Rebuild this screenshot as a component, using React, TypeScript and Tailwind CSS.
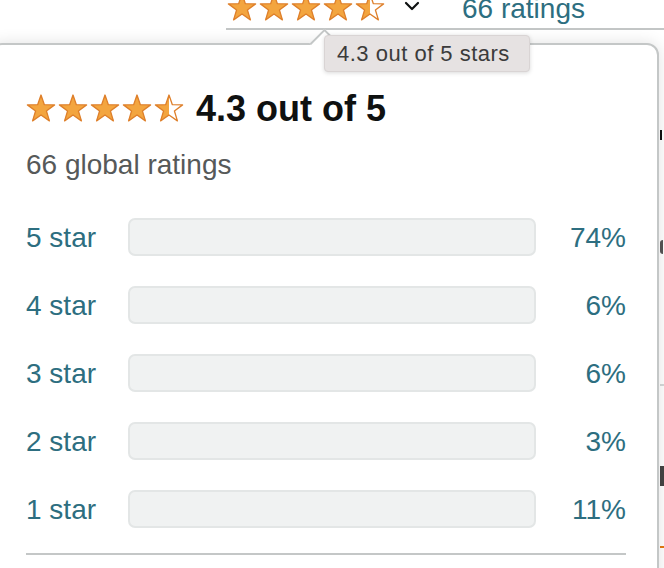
import React from 'react'

// star geometry, viewBox 0 0 30 28.5
const starPoints = Array.from({ length: 10 }, (_, i) => {
  const r = i % 2 === 0 ? 14.3 : 5.7
  const a = (Math.PI / 5) * i - Math.PI / 2
  return `${(15 + r * Math.cos(a)).toFixed(2)},${(15.3 + r * Math.sin(a)).toFixed(2)}`
}).join(' ')

const Star = ({ fill, id }: { fill: number; id: string }) => (
  <svg width="30" height="28.5" viewBox="0 0 30 28.5" className="shrink-0">
    <defs>
      <linearGradient id={id} x1="0" x2="1" y1="0" y2="0">
        <stop offset={fill} stopColor="#f3a53f" />
        <stop offset={fill} stopColor="#ffffff" />
      </linearGradient>
    </defs>
    <polygon points={starPoints} fill={`url(#${id})`} stroke="#de7f2a" strokeWidth="1.3" strokeLinejoin="round" />
  </svg>
)

const Stars = ({ prefix }: { prefix: string }) => (
  <div className="flex gap-[2px]">
    <Star fill={1} id={`${prefix}1`} />
    <Star fill={1} id={`${prefix}2`} />
    <Star fill={1} id={`${prefix}3`} />
    <Star fill={1} id={`${prefix}4`} />
    <Star fill={0.5} id={`${prefix}5`} />
  </div>
)

const rows = [
  { label: '5 star', pct: '74%' },
  { label: '4 star', pct: '6%' },
  { label: '3 star', pct: '6%' },
  { label: '2 star', pct: '3%' },
  { label: '1 star', pct: '11%' },
]

export default function App() {
  return (
    <div className="relative w-[664px] h-[568px] overflow-hidden bg-white font-['Liberation_Sans',Arial,sans-serif]">

      {/*page behind the popover*/}
      <div className="flex flex-row h-[28px] ml-[227px]">
        <div className="mt-[-7px]">
          <Stars prefix="top" />
        </div>
        <svg width="24" height="24" viewBox="0 0 24 24" fill="none" stroke="#0f1111" strokeWidth={2.2} strokeLinecap="round" strokeLinejoin="round" className="ml-[15px] mt-[-6px]">
          <path d="m6 9 6 6 6-6" />
        </svg>
        <span className="ml-[38px] mt-[-5px] text-[28px] leading-[28px] text-[#2d6e80] whitespace-nowrap">66 ratings</span>
      </div>
      <div className="ml-[226px] h-[2px] bg-[#c3c6c6]" />

      {/*edge of page content on the right*/}
      <div className="flex flex-col ml-[660px] w-[4px]">
        <div className="mt-[100px] h-[10px] w-[2px] bg-[#111]" />
        <div className="mt-[100px] h-[14px] w-[3px] rounded-l-full bg-[#555]" />
        <div className="mt-[130px] h-[2px] w-[4px] bg-[#d5d9d9]" />
        <div className="mt-[80px] h-[20px] w-[4px] bg-[#444]" />
        <div className="mt-[60px] h-[2px] w-[4px] bg-[#e47911]" />
      </div>

      {/*popover*/}
      <div className="absolute left-[-10px] top-[43px] w-[669px] h-[560px] rounded-[12px] border-2 border-[#c4c7c7] bg-white shadow-[0_0_16px_rgba(0,0,0,0.12)] pl-[34px] pr-[31px] pt-[45px]">
        {/*arrow*/}
        <div className="absolute left-[322px] top-[-12px] w-[21px] h-[21px] rotate-45 border-t-2 border-l-2 border-[#c4c7c7] bg-white" />

        <div className="flex flex-row items-center h-[36px] gap-[12px]">
          <Stars prefix="pop" />
          <span className="mt-[2px] text-[36px] leading-[36px] font-bold text-[#0f1111] whitespace-nowrap">4.3 out of 5</span>
        </div>

        <div className="mt-[25px] text-[28px] leading-[28px] text-[#565959]">66 global ratings</div>

        <div className="mt-[39px] flex flex-col gap-[30px]">
          {rows.map((r) => (
            <div key={r.label} className="flex flex-row items-center h-[38px]">
              <span className="mt-[2px] w-[102px] text-[28px] leading-[28px] text-[#2d6e80] whitespace-nowrap">{r.label}</span>
              <div className="w-[408px] h-[38px] rounded-[7px] border-2 border-[#e3e6e6] bg-[#f0f2f2]" />
              <span className="mt-[2px] flex-1 text-right text-[28px] leading-[28px] text-[#2d6e80]">{r.pct}</span>
            </div>
          ))}
        </div>

        <div className="mt-[25px] h-[2px] bg-[#c4c7c7]" />
      </div>

      {/*tooltip*/}
      <div className="absolute left-[324px] top-[35px] w-[206px] h-[37px] rounded-[4px] border border-[#d9d4d4] bg-[#e6e2e2] shadow-[0_1px_4px_rgba(0,0,0,0.15)] pl-[12px] flex items-center">
        <span className="text-[22px] leading-[22px] tracking-[0.5px] text-[#3b3b3b] whitespace-nowrap">4.3 out of 5 stars</span>
      </div>
    </div>
  )
}
